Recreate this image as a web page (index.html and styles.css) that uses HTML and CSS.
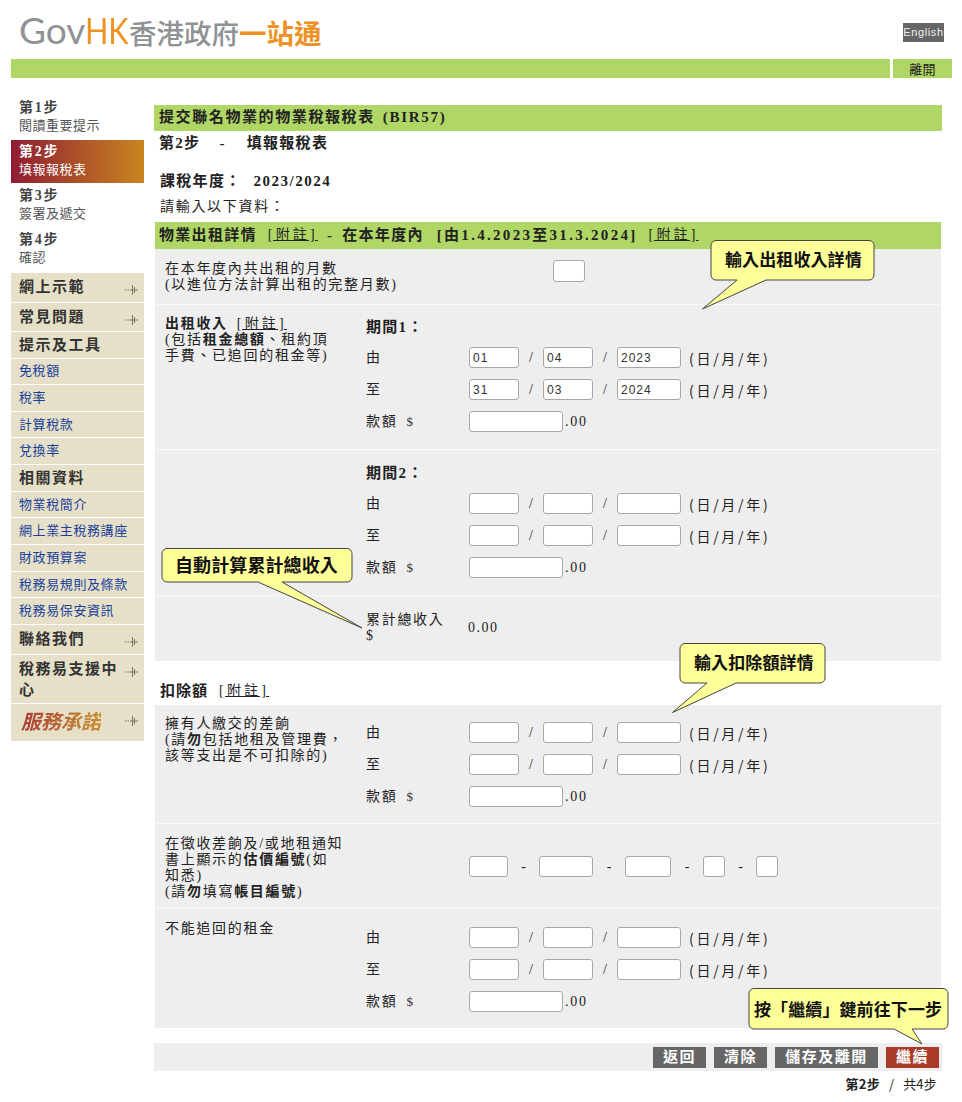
FILE: index.html
```html
<!DOCTYPE html>
<html lang="zh-Hant">
<head>
<meta charset="utf-8">
<title>GovHK 香港政府一站通</title>
<link rel="stylesheet" href="styles.css">
</head>
<body>
<svg width="0" height="0" class="defs"><defs>
<symbol id="arrow" viewBox="0 0 13 12"><path d="M0 6h1.500M2.500 6h1.500M5 6h8M7.500 1v10M9.500 3v6" stroke="#77776a" stroke-width="1" fill="none"/></symbol>
</defs></svg>
<header class="top">
  <div class="logo"><span class="g">Gov</span><span class="o"><span class="hk">HK</span></span><span class="gc">香港政府</span><span class="oc">一站通</span></div>
  <a class="lang">English</a>
</header>
<div class="greenbar"><div class="bar"></div><div class="exit">離開</div></div>
<div class="main">
  <aside class="side">
    <div class="step"><b>第1步</b><span>閱讀重要提示</span></div>
    <div class="step active"><b>第2步</b><span>填報報稅表</span></div>
    <div class="step"><b>第3步</b><span>簽署及遞交</span></div>
    <div class="step"><b>第4步</b><span>確認</span></div>
    <nav class="nav">
      <div class="ni head exp">網上示範<svg class="ar"><use href="#arrow"/></svg></div>
      <div class="ni head exp">常見問題<svg class="ar"><use href="#arrow"/></svg></div>
      <div class="ni head sec">提示及工具</div>
      <div class="ni link">免稅額</div>
      <div class="ni link">稅率</div>
      <div class="ni link">計算稅款</div>
      <div class="ni link">兌換率</div>
      <div class="ni head lk">相關資料</div>
      <div class="ni link">物業稅簡介</div>
      <div class="ni link">網上業主稅務講座</div>
      <div class="ni link">財政預算案</div>
      <div class="ni link">稅務易規則及條款</div>
      <div class="ni link">稅務易保安資訊</div>
      <div class="ni head exp">聯絡我們<svg class="ar"><use href="#arrow"/></svg></div>
      <div class="ni head multi"><span class="mt">稅務易支援中心</span><svg class="ar"><use href="#arrow"/></svg></div>
      <div class="ni pledge"><span class="pt">服務承諾</span><svg class="ar"><use href="#arrow"/></svg></div>
    </nav>
  </aside>
  <main class="content">
    <h1 class="title">提交聯名物業的物業稅報稅表<span class="bir">(BIR57)</span></h1>
    <div class="sub"><b>第2步</b><b class="dash">-</b><b>填報報稅表</b></div>
    <div class="year"><b>課稅年度：</b><b class="yr">2023/2024</b></div>
    <div class="hint">請輸入以下資料：</div>
    <h2 class="sect"><b>物業出租詳情</b><u class="note">[附註]</u><b class="m1">-</b><b class="m2">在本年度內</b><b class="m3">[由1.4.2023至31.3.2024]</b><u class="note">[附註]</u></h2>

    <section class="row r1">
      <div class="lbl wide">在本年度內共出租的月數<br>(以進位方法計算出租的完整月數)</div>
      <input class="inp w32" type="text">
    </section>

    <section class="row r2">
      <div class="lbl"><b>出租收入</b><u class="nt note">[附註]</u><br>(包括<b>租金總額</b>、租約頂<br>手費、已追回的租金等)</div>
      <div class="fields">
        <div class="period"><b>期間1：</b></div>
        <div class="fl"><span class="k">由</span><input class="inp w50" value="01"><i>/</i><input class="inp w50" value="04"><i>/</i><input class="inp w64" value="2023"><span class="dm">(日/月/年)</span></div>
        <div class="fl"><span class="k">至</span><input class="inp w50" value="31"><i>/</i><input class="inp w50" value="03"><i>/</i><input class="inp w64" value="2024"><span class="dm">(日/月/年)</span></div>
        <div class="fl"><span class="k">款額<em>$</em></span><input class="inp w94"><span class="c00">.00</span></div>
      </div>
    </section>

    <section class="row r3">
      <div class="lbl"></div>
      <div class="fields">
        <div class="period"><b>期間2：</b></div>
        <div class="fl"><span class="k">由</span><input class="inp w50"><i>/</i><input class="inp w50"><i>/</i><input class="inp w64"><span class="dm">(日/月/年)</span></div>
        <div class="fl"><span class="k">至</span><input class="inp w50"><i>/</i><input class="inp w50"><i>/</i><input class="inp w64"><span class="dm">(日/月/年)</span></div>
        <div class="fl"><span class="k">款額<em>$</em></span><input class="inp w94"><span class="c00">.00</span></div>
      </div>
    </section>

    <section class="row r4">
      <div class="lbl"></div>
      <div class="total"><span class="tl">累計總收入<br>$</span><span class="tv">0.00</span></div>
    </section>

    <div class="ded"><b>扣除額</b><u class="note">[附註]</u></div>

    <section class="row r5">
      <div class="lbl">擁有人繳交的差餉<br>(請<b>勿</b>包括地租及管理費，<br>該等支出是不可扣除的)</div>
      <div class="fields">
        <div class="fl"><span class="k">由</span><input class="inp w50"><i>/</i><input class="inp w50"><i>/</i><input class="inp w64"><span class="dm">(日/月/年)</span></div>
        <div class="fl"><span class="k">至</span><input class="inp w50"><i>/</i><input class="inp w50"><i>/</i><input class="inp w64"><span class="dm">(日/月/年)</span></div>
        <div class="fl"><span class="k">款額<em>$</em></span><input class="inp w94"><span class="c00">.00</span></div>
      </div>
    </section>

    <section class="row r6">
      <div class="lbl">在徵收差餉及/或地租通知<br>書上顯示的<b>估價編號</b>(如<br>知悉)<br>(請<b>勿</b>填寫<b>帳目編號</b>)</div>
      <div class="fl ass"><span class="k"></span><input class="inp w39"><s>-</s><input class="inp w54"><s>-</s><input class="inp w46"><s>-</s><input class="inp w22"><s>-</s><input class="inp w22"></div>
    </section>

    <section class="row r7">
      <div class="lbl">不能追回的租金</div>
      <div class="fields">
        <div class="fl"><span class="k">由</span><input class="inp w50"><i>/</i><input class="inp w50"><i>/</i><input class="inp w64"><span class="dm">(日/月/年)</span></div>
        <div class="fl"><span class="k">至</span><input class="inp w50"><i>/</i><input class="inp w50"><i>/</i><input class="inp w64"><span class="dm">(日/月/年)</span></div>
        <div class="fl"><span class="k">款額<em>$</em></span><input class="inp w94"><span class="c00">.00</span></div>
      </div>
    </section>

    <div class="btnbar">
      <a class="btn w53">返回</a><a class="btn w53">清除</a><a class="btn w103">儲存及離開</a><a class="btn w53 go">繼續</a>
    </div>
    <div class="pager"><b>第2步</b><span class="sl">/</span>共4步</div>
  </main>
</div>

<div class="callout c1"><svg width="180" height="75" viewBox="0 0 180 75"><path d="M14 .5H167a5 5 0 0 1 5 5V35a5 5 0 0 1-5 5H64L.5 69 35 40H14a5 5 0 0 1-5-5V5.500a5 5 0 0 1 5-5z" class="bub"/></svg><span>輸入出租收入詳情</span></div>
<div class="callout c2"><svg width="205" height="84" viewBox="0 0 205 84"><path d="M6 .5H186a5 5 0 0 1 5 5V29a5 5 0 0 1-5 5H121L201 80 97 34H6a5 5 0 0 1-5-5V5.500a5 5 0 0 1 5-5z" class="bub"/></svg><span>自動計算累計總收入</span></div>
<div class="callout c3"><svg width="160" height="75" viewBox="0 0 160 75"><path d="M13 .5H148a5 5 0 0 1 5 5V35a5 5 0 0 1-5 5H64L.5 69.500 35 40H13a5 5 0 0 1-5-5V5.500a5 5 0 0 1 5-5z" class="bub"/></svg><span>輸入扣除額詳情</span></div>
<div class="callout c4"><svg width="202" height="58" viewBox="0 0 202 58"><path d="M6 .5H195a5 5 0 0 1 5 5V36a5 5 0 0 1-5 5H164L174 56 146 41H6a5 5 0 0 1-5-5V5.500a5 5 0 0 1 5-5z" class="bub"/></svg><span>按「繼續」鍵前往下一步</span></div>
</body>
</html>
```
FILE: styles.css
```css
* { box-sizing: border-box; }
html, body { margin: 0; padding: 0; }
body {
  position: relative;
  width: 962px;
  height: 1102px;
  overflow: hidden;
  background: #fff;
  color: #222;
  font-family: "Liberation Serif", "Noto Sans CJK TC", serif;
  font-size: 14px;
  letter-spacing: 1.7px;
  line-height: 16px;
}
.defs { position: absolute; }
b { font-weight: 700; }
u { font-weight: 400; }
.note { letter-spacing: 3.2px; }

.top { height: 59px; display: flex; justify-content: space-between; align-items: flex-start; padding: 0 18px 0 19px; }
.logo { display: flex; align-items: baseline; height: 59px; padding-top: 10px; line-height: 40px; letter-spacing: 0; font-family: "Noto Sans CJK TC", sans-serif; }
.logo .g { font-family: "Lato", sans-serif; font-size: 37px; color: #8f9294; width: 66px; letter-spacing: 0; }
.logo .o { font-family: "Lato", sans-serif; font-size: 36px; color: #ee9224; width: 44px; }
.logo .hk { display: inline-block; transform: scaleX(.85); transform-origin: left center; }
.logo .gc { font-size: 27.500px; font-weight: 500; color: #8f9294; }
.logo .oc { font-size: 27.500px; font-weight: 700; color: #ee9224; }
.lang { margin-top: 23px; width: 41px; height: 19px; background: #666; color: #f0f0f0; font: 11px/19px "Liberation Sans", sans-serif; letter-spacing: .6px; text-align: center; }

.greenbar { display: flex; gap: 3px; margin: 0 10px 0 11px; height: 19px; }
.bar { flex: 1; background: #b0d665; }
.exit { width: 59px; background: #b0d665; text-align: center; font: 13px/19px "Noto Sans CJK TC", sans-serif; letter-spacing: .3px; color: #222; }

.main { display: flex; padding: 18px 0 0 11px; }
.side { width: 133px; flex: none; }
.step { height: 43px; margin-bottom: 1px; padding: 3px 0 0 8px; display: flex; flex-direction: column; color: #444; }
.step b { font-size: 14px; line-height: 18px; letter-spacing: 1.700px; }
.step span { font-size: 13px; line-height: 18px; letter-spacing: .5px; color: #555; }
.step.active { background: linear-gradient(90deg, #8f1c33, #c9851f); }
.step.active b, .step.active span { color: #fff; }

.nav { margin-top: 2px; width: 133px; }
.ni { position: relative; background: #e6e0c8; margin-bottom: 1px; padding-left: 8px; display: flex; align-items: center; }
.ni .ar { position: absolute; right: 6px; top: 11px; width: 13px; height: 12px; }
.head { font-weight: 700; font-size: 15px; letter-spacing: 1.500px; color: #333; }
.exp { height: 28.500px; }
.sec { height: 25.500px; }
.lk { height: 25.670px; }
.link { height: 25.670px; font-size: 13px; letter-spacing: .6px; color: #1a3f9b; }
.multi { height: 48px; align-items: flex-start; padding-top: 4px; line-height: 21px; }
.multi .mt { width: 104px; }
.pledge { height: 37px; }
.pledge .pt { padding-left: 2px; font-size: 20px; font-weight: 700; font-style: italic; letter-spacing: 0; line-height: 30px; background: linear-gradient(90deg, #a83a36, #c8902f); -webkit-background-clip: text; background-clip: text; color: transparent; }

.content { width: 788px; margin-left: 10px; padding-top: 9px; }
.title { margin: 0; height: 26px; background: #b0d665; padding-left: 5px; font-size: 15px; line-height: 25px; letter-spacing: 1.600px; color: #222; }
.bir { margin-left: 8px; letter-spacing: 1.700px; }
.sub { height: 25px; line-height: 25px; padding-left: 5px; display: flex; font-size: 15px; letter-spacing: 1.300px; }
.sub .dash { margin: 0 21px 0 19px; }
.year { margin-top: 13px; height: 24px; line-height: 24px; padding-left: 6px; font-size: 15px; letter-spacing: 1.300px; }
.yr { margin-left: 12px; letter-spacing: 1.500px; }
.hint { margin-top: 4px; height: 20px; line-height: 20px; padding-left: 6px; margin-bottom: 5px; }
.sect { margin: 0 0 0 1px; width: 786px; height: 27px; background: #b0d665; padding-left: 4px; font-size: 15px; line-height: 26px; font-weight: 400; display: flex; white-space: nowrap; letter-spacing: 1.300px; }
.sect u { margin-left: 11px; font-size: 14px; letter-spacing: 3.200px; }
.sect .m1 { margin-left: 9px; }
.sect .m2 { margin-left: 9px; }
.sect .m3 { margin-left: 13px; letter-spacing: 2.300px; }

.row { display: flex; margin-left: 1px; width: 786px; background: #eee; padding-left: 10px; border-bottom: 1px solid #f8f8f8; }
.lbl { width: 201px; flex: none; padding-right: 8px; line-height: 16px; white-space: nowrap; }
.lbl.wide { width: 388px; padding-right: 0; }
.nt { margin-left: 9px; }
.r1 { height: 56px; padding-top: 12px; align-items: flex-start; }
.r1 .inp { margin-top: -1px; }
.r2 { height: 145px; padding-top: 11px; }
.r3 { height: 146px; padding-top: 15px; }
.r4 { height: 65px; padding-top: 16px; border-bottom: 0; }
.r5 { height: 119px; padding-top: 11px; }
.r5 .fields { padding-top: 6px; }
.r6 { height: 85px; padding-top: 12px; }
.r6 .ass { margin-top: 20px; }
.r6 .k { width: 103px; }
.r7 { height: 119px; padding-top: 12px; border-bottom: 0; }
.r7 .fields { padding-top: 6px; }

.fields { display: flex; flex-direction: column; gap: 11px; }
.period { height: 16px; margin-top: 3px; margin-bottom: 1px; font-size: 15px; letter-spacing: 1.300px; }
.r3 .period { margin-top: 0; margin-bottom: 1px; }
.fl { display: flex; align-items: center; height: 21px; }
.k { width: 103px; flex: none; white-space: pre; }
.k em { font-style: normal; margin-left: 9px; font-size: 13px; color: #333; }
.inp { height: 21px; padding: 0 3px; border: 1px solid #a8a8a8; border-radius: 3px; background: #fff; font: 12px "Liberation Sans", sans-serif; letter-spacing: 1px; color: #333; outline: 0; }
.w22 { width: 22px; }
.w32 { width: 32px; height: 22px; }
.w39 { width: 39px; }
.w46 { width: 46px; }
.w50 { width: 50px; }
.w54 { width: 54px; }
.w64 { width: 64px; }
.w94 { width: 94px; }
.fl i { width: 24px; text-align: center; font-style: normal; letter-spacing: 0; }
.fl s { text-decoration: none; text-align: center; letter-spacing: 0; width: 31px; }
.ass s:nth-of-type(1) { width: 31px; }
.ass s:nth-of-type(2) { width: 32px; }
.ass s:nth-of-type(3) { width: 32px; }
.dm { margin-left: 8px; white-space: nowrap; letter-spacing: 2.700px; font-family: "Noto Sans CJK TC", sans-serif; font-size: 14px; }
.c00 { margin-left: 2px; }
.total { display: flex; align-items: center; height: 32px; }
.tl { width: 102px; }
.tv { letter-spacing: 1.500px; font-size: 14px; }

.ded { height: 44px; padding: 22px 0 0 6px; line-height: 16px; display: flex; font-size: 15px; letter-spacing: 1px; }
.ded u { margin-left: 11px; font-size: 14px; letter-spacing: 3.200px; }

.btnbar { margin-top: 15px; height: 28px; background: #eee; display: flex; justify-content: flex-end; padding: 4px 3px 0 0; gap: 8px; }
.btn { height: 21px; background: #666; color: #fff; font-size: 15px; font-weight: 700; line-height: 20px; text-align: center; letter-spacing: 1.500px; }
.w53 { width: 53px; }
.w103 { width: 103px; }
.btn.go { background: #a93a28; }
.pager { margin-top: 5px; padding-right: 5px; text-align: right; font: 13px/16px "Noto Sans CJK TC", sans-serif; letter-spacing: .2px; }
.pager .sl { margin: 0 9px; }

.callout { position: absolute; }
.callout svg { position: absolute; left: 0; top: 0; }
.bub { fill: #ffff99; stroke: #444; stroke-width: 1; }
.callout span { position: absolute; font: 700 17px/20px "Noto Sans CJK TC", sans-serif; color: #111; letter-spacing: .1px; white-space: nowrap; }
.c1 { left: 702px; top: 240px; width: 180px; height: 75px; }
.c1 span { left: 23px; top: 9px; }
.c2 { left: 161px; top: 548px; width: 205px; height: 84px; }
.c2 span { left: 14px; top: 6px; font-size: 18px; }
.c3 { left: 672px; top: 643px; width: 160px; height: 75px; }
.c3 span { left: 22px; top: 9px; }
.c4 { left: 748px; top: 988px; width: 202px; height: 58px; }
.c4 span { left: 6px; top: 11px; }
```
